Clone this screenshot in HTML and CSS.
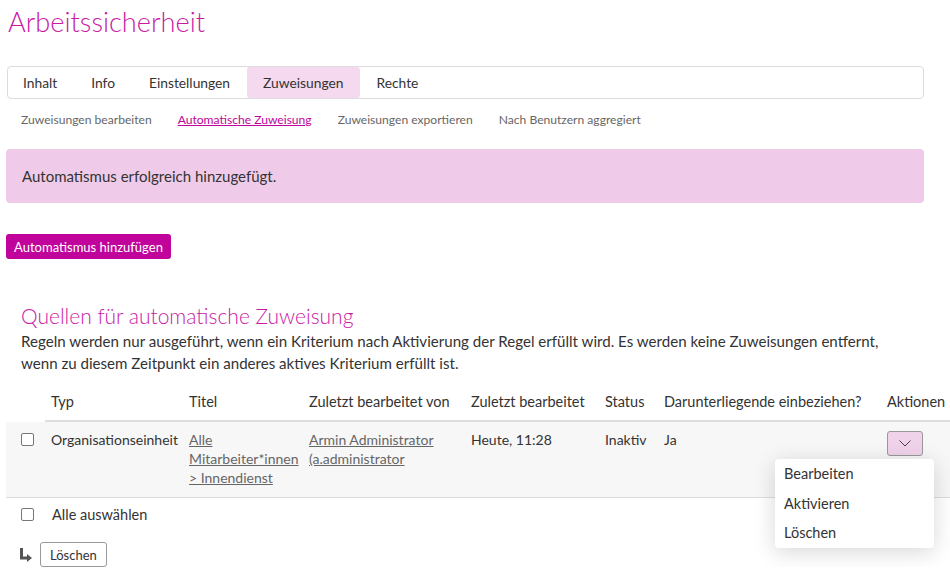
FILE: index.html
```html
<!DOCTYPE html>
<html lang="de">
<head>
<meta charset="utf-8">
<title>Arbeitssicherheit</title>
<link rel="stylesheet" href="styles.css">
</head>
<body>
<div class="page">
  <h1 class="title">Arbeitssicherheit</h1>

  <nav class="tabs">
    <a class="tab">Inhalt</a>
    <a class="tab">Info</a>
    <a class="tab">Einstellungen</a>
    <a class="tab active">Zuweisungen</a>
    <a class="tab">Rechte</a>
  </nav>

  <nav class="subnav">
    <a class="sub">Zuweisungen bearbeiten</a>
    <a class="sub active">Automatische Zuweisung</a>
    <a class="sub">Zuweisungen exportieren</a>
    <a class="sub">Nach Benutzern aggregiert</a>
  </nav>

  <div class="alert">Automatismus erfolgreich hinzugefügt.</div>

  <button class="btn-primary">Automatismus hinzufügen</button>

  <section class="section">
    <h2 class="section-title">Quellen für automatische Zuweisung</h2>
    <p class="intro">Regeln werden nur ausgeführt, wenn ein Kriterium nach Aktivierung der Regel erfüllt wird. Es werden keine Zuweisungen entfernt,<br>wenn zu diesem Zeitpunkt ein anderes aktives Kriterium erfüllt ist.</p>
  </section>

  <table class="grid">
    <colgroup>
      <col class="c-check"><col class="c-typ"><col class="c-titel"><col class="c-von"><col class="c-zuletzt"><col class="c-status"><col class="c-dar"><col class="c-akt">
    </colgroup>
    <thead>
      <tr>
        <th class="blank"></th>
        <th>Typ</th>
        <th>Titel</th>
        <th>Zuletzt bearbeitet von</th>
        <th>Zuletzt bearbeitet</th>
        <th>Status</th>
        <th>Darunterliegende einbeziehen?</th>
        <th>Aktionen</th>
      </tr>
    </thead>
    <tbody>
      <tr class="row">
        <td class="chk"><span class="checkbox"></span></td>
        <td>Organisationseinheit</td>
        <td><a class="link">Alle<br>Mitarbeiter*innen<br>&gt; Innendienst</a></td>
        <td><a class="link">Armin Administrator<br>(a.administrator</a></td>
        <td>Heute, 11:28</td>
        <td>Inaktiv</td>
        <td>Ja</td>
        <td class="actions">
          <button class="dd-btn" aria-label="Aktionen">
            <svg width="12" height="7" viewBox="0 0 12 7"><path d="M0.5 0.5 L6 6 L11.5 0.5" fill="none" stroke="#444" stroke-width="1"/></svg>
          </button>
          <ul class="menu">
            <li>Bearbeiten</li>
            <li>Aktivieren</li>
            <li>Löschen</li>
          </ul>
        </td>
      </tr>
    </tbody>
  </table>

  <div class="select-all">
    <span class="checkbox"></span>
    <span>Alle auswählen</span>
  </div>

  <div class="bulk">
    <svg class="arrow" width="12" height="14" viewBox="0 0 12 14"><path d="M1.5 0 V10 H8" fill="none" stroke="#555" stroke-width="3"/><path d="M7 6 L12 10 L7 14 Z" fill="#555"/></svg>
    <button class="btn">Löschen</button>
  </div>
</div>
</body>
</html>
```

FILE: styles.css
```css
* { box-sizing: border-box; }
html, body { margin: 0; padding: 0; background: #fff; }
body {
  font-family: "Lato", "Noto Sans", sans-serif;
  color: #333;
  font-size: 14.5px;
}
.page { padding: 0 26px 0 6px; }

.title {
  margin: 0;
  padding: 5px 0 0 2px;
  font-size: 27.2px;
  font-weight: 300;
  color: #c81aa5;
  line-height: 34px;
  height: 66px;
}

.tabs {
  display: flex;
  border: 1px solid #dcdcdc;
  border-radius: 4px;
  height: 33px;
  margin-left: 1px;
}
.tab {
  display: flex;
  align-items: center;
  padding: 0 17px;
  font-size: 13.8px;
  color: #333;
  border-radius: 3px;
}
.tab:first-child { margin-left: -2px; }
.tab.active { background: #f5d9ee; padding: 0 16px; }

.subnav {
  display: flex;
  gap: 26px;
  padding: 13px 0 0 15px;
  height: 50px;
  font-size: 12.1px;
}
.sub { color: #666; }
.sub.active { color: #c0049b; text-decoration: underline; }

.alert {
  background: #f0cbe9;
  border-radius: 4px;
  height: 54px;
  display: flex;
  align-items: center;
  padding: 0 16px;
  font-size: 15px;
  color: #333;
}

.btn-primary {
  margin-top: 31px;
  display: block;
  background: #c0049b;
  color: #fff;
  border: 0;
  border-radius: 3px;
  height: 25px;
  width: 165px;
  font-family: inherit;
  font-size: 13px;
  padding: 0;
}

.section { padding: 43px 0 0 15px; }
.section-title {
  margin: 0;
  font-size: 21px;
  font-weight: 300;
  color: #c81aa5;
  line-height: 28px;
}
.intro {
  margin: 0;
  line-height: 22px;
  font-size: 15.1px;
  color: #333;
}

.grid {
  border-collapse: collapse;
  table-layout: fixed;
  width: 950px;
  margin-top: 9px;
}
.c-check { width: 39px; }
.c-typ { width: 138px; }
.c-titel { width: 120px; }
.c-von { width: 162px; }
.c-zuletzt { width: 134px; }
.c-status { width: 59px; }
.c-dar { width: 223px; }
.c-akt { width: 75px; }

.grid th {
  text-align: left;
  font-weight: 400;
  padding: 9px 6px 9px 6px;
  line-height: 19px;
  border-bottom: 2px solid #dedede;
  white-space: nowrap;
}
.grid th.blank { border-bottom-color: #fff; }
.row td {
  background: #f7f7f7;
  vertical-align: top;
  padding: 8px 6px 10px 6px;
  line-height: 19px;
  border-bottom: 1px solid #ddd;
  white-space: nowrap;
  font-size: 14px;
}
.row td.chk { padding-left: 15px; padding-top: 11px; }
.link { color: #666; text-decoration: underline; }

.checkbox {
  display: inline-block;
  width: 13px;
  height: 13px;
  border: 1px solid #777;
  border-radius: 2px;
  background: #fff;
  vertical-align: top;
}

.actions { position: relative; }
.dd-btn {
  width: 36px;
  height: 25px;
  background: #f0d3ea;
  border: 1px solid #999;
  border-radius: 3px;
  display: flex;
  align-items: center;
  justify-content: center;
  padding: 0;
  margin-top: 1px;
}
.menu {
  position: absolute;
  top: 37px;
  left: -106px;
  width: 159px;
  margin: 0;
  padding: 0;
  list-style: none;
  background: #fff;
  border-radius: 4px;
  box-shadow: 0 4px 22px rgba(0,0,0,0.16);
  z-index: 2;
}
.menu li {
  padding: 0 9px;
  line-height: 29.5px;
  font-size: 14.5px;
  color: #333;
}

.select-all {
  display: flex;
  align-items: center;
  gap: 18px;
  padding: 4px 0 0 15px;
  height: 29px;
}
.bulk {
  display: flex;
  align-items: center;
  gap: 8px;
  padding: 15px 0 0 14px;
}
.arrow { display: block; }
.btn {
  height: 25px;
  padding: 0 9px;
  background: #fff;
  border: 1px solid #999;
  border-radius: 3px;
  font-family: inherit;
  font-size: 13px;
  color: #333;
}
```
